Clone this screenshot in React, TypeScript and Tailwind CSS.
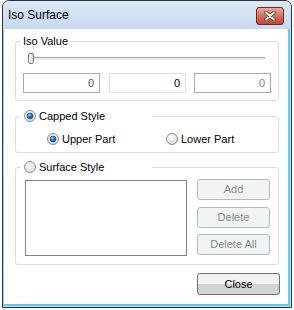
import React from "react";

const font = { fontFamily: '"Liberation Sans", Arial, sans-serif' };

function Radio({ checked }: { checked?: boolean }) {
  return (
    <svg width="12" height="12" viewBox="0 0 12 12" className="shrink-0">
      <defs>
        <radialGradient id="rbg" cx="0.35" cy="0.3" r="0.8">
          <stop offset="0" stopColor="#ffffff" />
          <stop offset="1" stopColor="#d4d4d4" />
        </radialGradient>
        <radialGradient id="rdot" cx="0.4" cy="0.35" r="0.7">
          <stop offset="0" stopColor="#8fd0f5" />
          <stop offset="0.5" stopColor="#1b78c0" />
          <stop offset="1" stopColor="#0a3f73" />
        </radialGradient>
      </defs>
      <circle cx="6" cy="6" r="5.5" fill="url(#rbg)" stroke="#8c8c8c" />
      <circle cx="6" cy="6" r="4" fill="none" stroke="#ebebeb" strokeWidth="0.8" />
      {checked && <circle cx="6" cy="6" r="3" fill="url(#rdot)" stroke="#16466f" strokeWidth="0.6" />}
    </svg>
  );
}

function Field({ value, border, color }: { value: string; border: string; color: string }) {
  return (
    <div className={`w-[77px] h-[20px] border ${border} bg-white flex items-center justify-end pr-[5px] text-[11px] ${color}`}>
      {value}
    </div>
  );
}

function SideButton({ label }: { label: string }) {
  return (
    <div className="w-[73px] h-[21px] border border-[#b4bcbb] rounded-[3px] bg-[#f0f5f3] flex items-center justify-center text-[11px] text-[#8a8a8a]">
      {label}
    </div>
  );
}

export default function App() {
  return (
    <div className="w-[294px] h-[310px] bg-white" style={font}>
      <div className="ml-[2px] w-[290px] h-[308px] border border-[#2c3540] rounded-t-[7px] bg-[#c8dcf1] flex flex-col overflow-hidden">
        {/* title bar */}
        <div className="h-[28px] shrink-0 flex justify-between pl-[5px] pr-[7px] bg-gradient-to-b from-[#dbe8f6] to-[#c6daf0]">
          <span className="text-[12px] text-black leading-[28px]">Iso Surface</span>
          <div className="mt-[6px] w-[28px] h-[18px] border border-[#6f2a20] rounded-[3px] bg-gradient-to-b from-[#e9ab9c] via-[#d3705f] to-[#c0473a] flex items-center justify-center">
            <svg width="12" height="10" viewBox="0 0 12 10">
              <path d="M2 1.5 L10 8.5 M10 1.5 L2 8.5" stroke="#5a2018" strokeWidth="3.6" strokeLinecap="round" />
              <path d="M2 1.5 L10 8.5 M10 1.5 L2 8.5" stroke="#ffffff" strokeWidth="2.2" strokeLinecap="round" />
            </svg>
          </div>
        </div>

        {/* client */}
        <div className="flex-1 bg-white border-l border-l-[#8fd6f2] border-r-2 border-b-2 border-r-[#5fc8ee] border-b-[#5fc8ee] mr-[1px] mb-[1px] text-[11px] text-black">
          {/* Iso Value */}
          <div className="relative ml-[11px] mt-[12px] w-[264px] h-[60px] border border-[#d5dfe5] rounded-[3px]">
            <span className="absolute left-[5px] top-[-8px] px-[2px] bg-white leading-[14px]">Iso Value</span>
            <div className="ml-[12px] mt-[11px] w-[237px] h-[11px] flex items-center">
              <div className="w-[6px] h-[11px] border border-[#7b7b7b] rounded-[2px] bg-gradient-to-r from-[#f4f4f4] to-[#dcdcdc]" />
              <div className="flex-1 h-[3px] border-t border-t-[#a8a8a8] bg-[#e6e9e9]" />
            </div>
            <div className="ml-[7px] mt-[9px] flex">
              <Field value="0" border="border-[#a8abb0]" color="text-[#555]" />
              <div className="ml-[9px]">
                <Field value="0" border="border-[#dde2e6]" color="text-black" />
              </div>
              <div className="ml-[8px]">
                <Field value="0" border="border-[#a8abb0]" color="text-[#8a7a96]" />
              </div>
            </div>
          </div>

          {/* Capped Style */}
          <div className="relative ml-[11px] mt-[15px] w-[264px] h-[37px] border border-[#d5dfe5] rounded-[3px]">
            <div className="absolute left-[4px] top-[-8px] w-[132px] h-[14px] bg-white flex items-center gap-[3px] pl-[4px]">
              <Radio checked />
              <span>Capped Style</span>
            </div>
            <div className="ml-[31px] mt-[14px] flex items-center">
              <div className="w-[119px] flex items-center gap-[3px]">
                <Radio checked />
                <span>Upper Part</span>
              </div>
              <div className="flex items-center gap-[3px]">
                <Radio />
                <span>Lower Part</span>
              </div>
            </div>
          </div>

          {/* Surface Style */}
          <div className="relative ml-[11px] mt-[14px] w-[264px] h-[98px] border border-[#d5dfe5] rounded-[3px]">
            <div className="absolute left-[4px] top-[-8px] w-[132px] h-[14px] bg-white flex items-center gap-[3px] pl-[4px]">
              <Radio />
              <span>Surface Style</span>
            </div>
            <div className="ml-[9px] mt-[12px] flex">
              <div className="w-[162px] h-[76px] border border-[#82808c] bg-white" />
              <div className="ml-[10px] -mt-[1px] flex flex-col">
                <SideButton label="Add" />
                <div className="mt-[7px]">
                  <SideButton label="Delete" />
                </div>
                <div className="mt-[6px]">
                  <SideButton label="Delete All" />
                </div>
              </div>
            </div>
          </div>

          {/* Close */}
          <div className="ml-[193px] mt-[8px] w-[83px] h-[22px] border border-[#707070] rounded-[3px] bg-gradient-to-b from-[#f2f2f2] from-50% to-[#d4d4d4] to-50% flex items-center justify-center text-[11px] text-black">
            Close
          </div>
        </div>
      </div>
    </div>
  );
}
